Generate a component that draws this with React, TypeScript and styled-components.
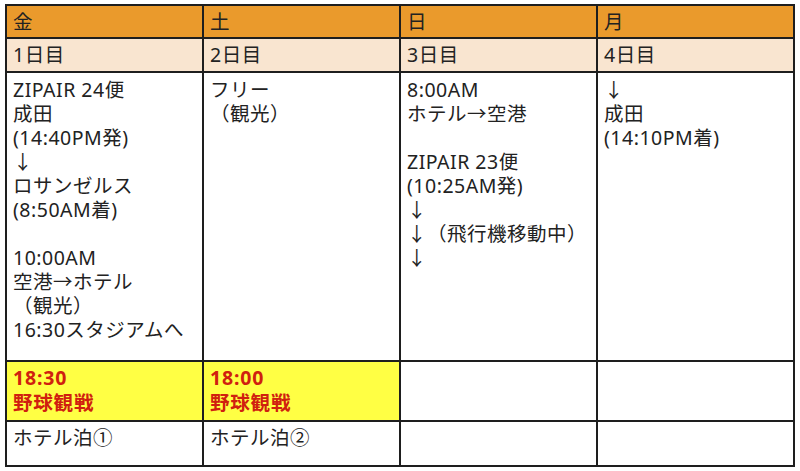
import React from 'react';
import styled, { createGlobalStyle } from 'styled-components';

const GlobalStyle = createGlobalStyle`
  html, body {
    margin: 0;
    padding: 0;
    background: #ffffff;
  }
  body {
    font-family: "Noto Sans", "Noto Sans CJK JP", sans-serif;
    color: #222222;
  }
`;

const Page = styled.div`
  padding: 4px 0 0 5px;
`;

const Grid = styled.div`
  display: grid;
  grid-template-columns: repeat(4, 1fr);
  grid-template-rows: 31px 32px 287px 58px 43px;
  gap: 2px;
  padding: 2px;
  width: 790px;
  box-sizing: border-box;
  background: #1e1e1e;
`;

type Tone = 'day' | 'num' | 'plain' | 'event';

const tones: Record<Tone, string> = {
  day: '#ea9a2c',
  num: '#f9e5d0',
  plain: '#ffffff',
  event: '#ffff44',
};

const Cell = styled.div<{ $tone: Tone; $middle?: boolean; $top?: number }>`
  background: ${(p) => tones[p.$tone]};
  display: flex;
  flex-direction: column;
  justify-content: ${(p) => (p.$middle ? 'center' : 'flex-start')};
  padding: ${(p) => p.$top ?? 0}px 6px 0 6px;
  font-size: 19.5px;
  line-height: 24px;
  letter-spacing: 0.5px;
  white-space: pre;
  overflow: hidden;
`;

const Event = styled.div`
  color: #d0200f;
  font-weight: 700;
  line-height: 25px;
  letter-spacing: 0.8px;
`;

const days = ['金', '土', '日', '月'];
const counts = ['1日目', '2日目', '3日目', '4日目'];

const plans = [
  'ZIPAIR 24便\n成田\n(14:40PM発)\n↓\nロサンゼルス\n(8:50AM着)\n\n10:00AM\n空港→ホテル\n（観光）\n16:30スタジアムへ',
  'フリー\n（観光）',
  '8:00AM\nホテル→空港\n\nZIPAIR 23便\n(10:25AM発)\n↓\n↓（飛行機移動中）\n↓',
  '↓\n成田\n(14:10PM着)',
];

const events = ['18:30\n野球観戦', '18:00\n野球観戦', '', ''];
const stays = ['ホテル泊①', 'ホテル泊②', '', ''];

export default function App() {
  return (
    <Page>
      <GlobalStyle />
      <Grid>
        {days.map((d) => (
          <Cell key={d} $tone="day" $middle>
            {d}
          </Cell>
        ))}
        {counts.map((c) => (
          <Cell key={c} $tone="num" $middle>
            {c}
          </Cell>
        ))}
        {plans.map((p, i) => (
          <Cell key={'p' + i} $tone="plain" $top={5}>
            {p}
          </Cell>
        ))}
        {events.map((e, i) => (
          <Cell key={'e' + i} $tone={e ? 'event' : 'plain'} $top={3}>
            {e && <Event>{e}</Event>}
          </Cell>
        ))}
        {stays.map((s, i) => (
          <Cell key={'s' + i} $tone="plain" $top={4}>
            {s}
          </Cell>
        ))}
      </Grid>
    </Page>
  );
}
